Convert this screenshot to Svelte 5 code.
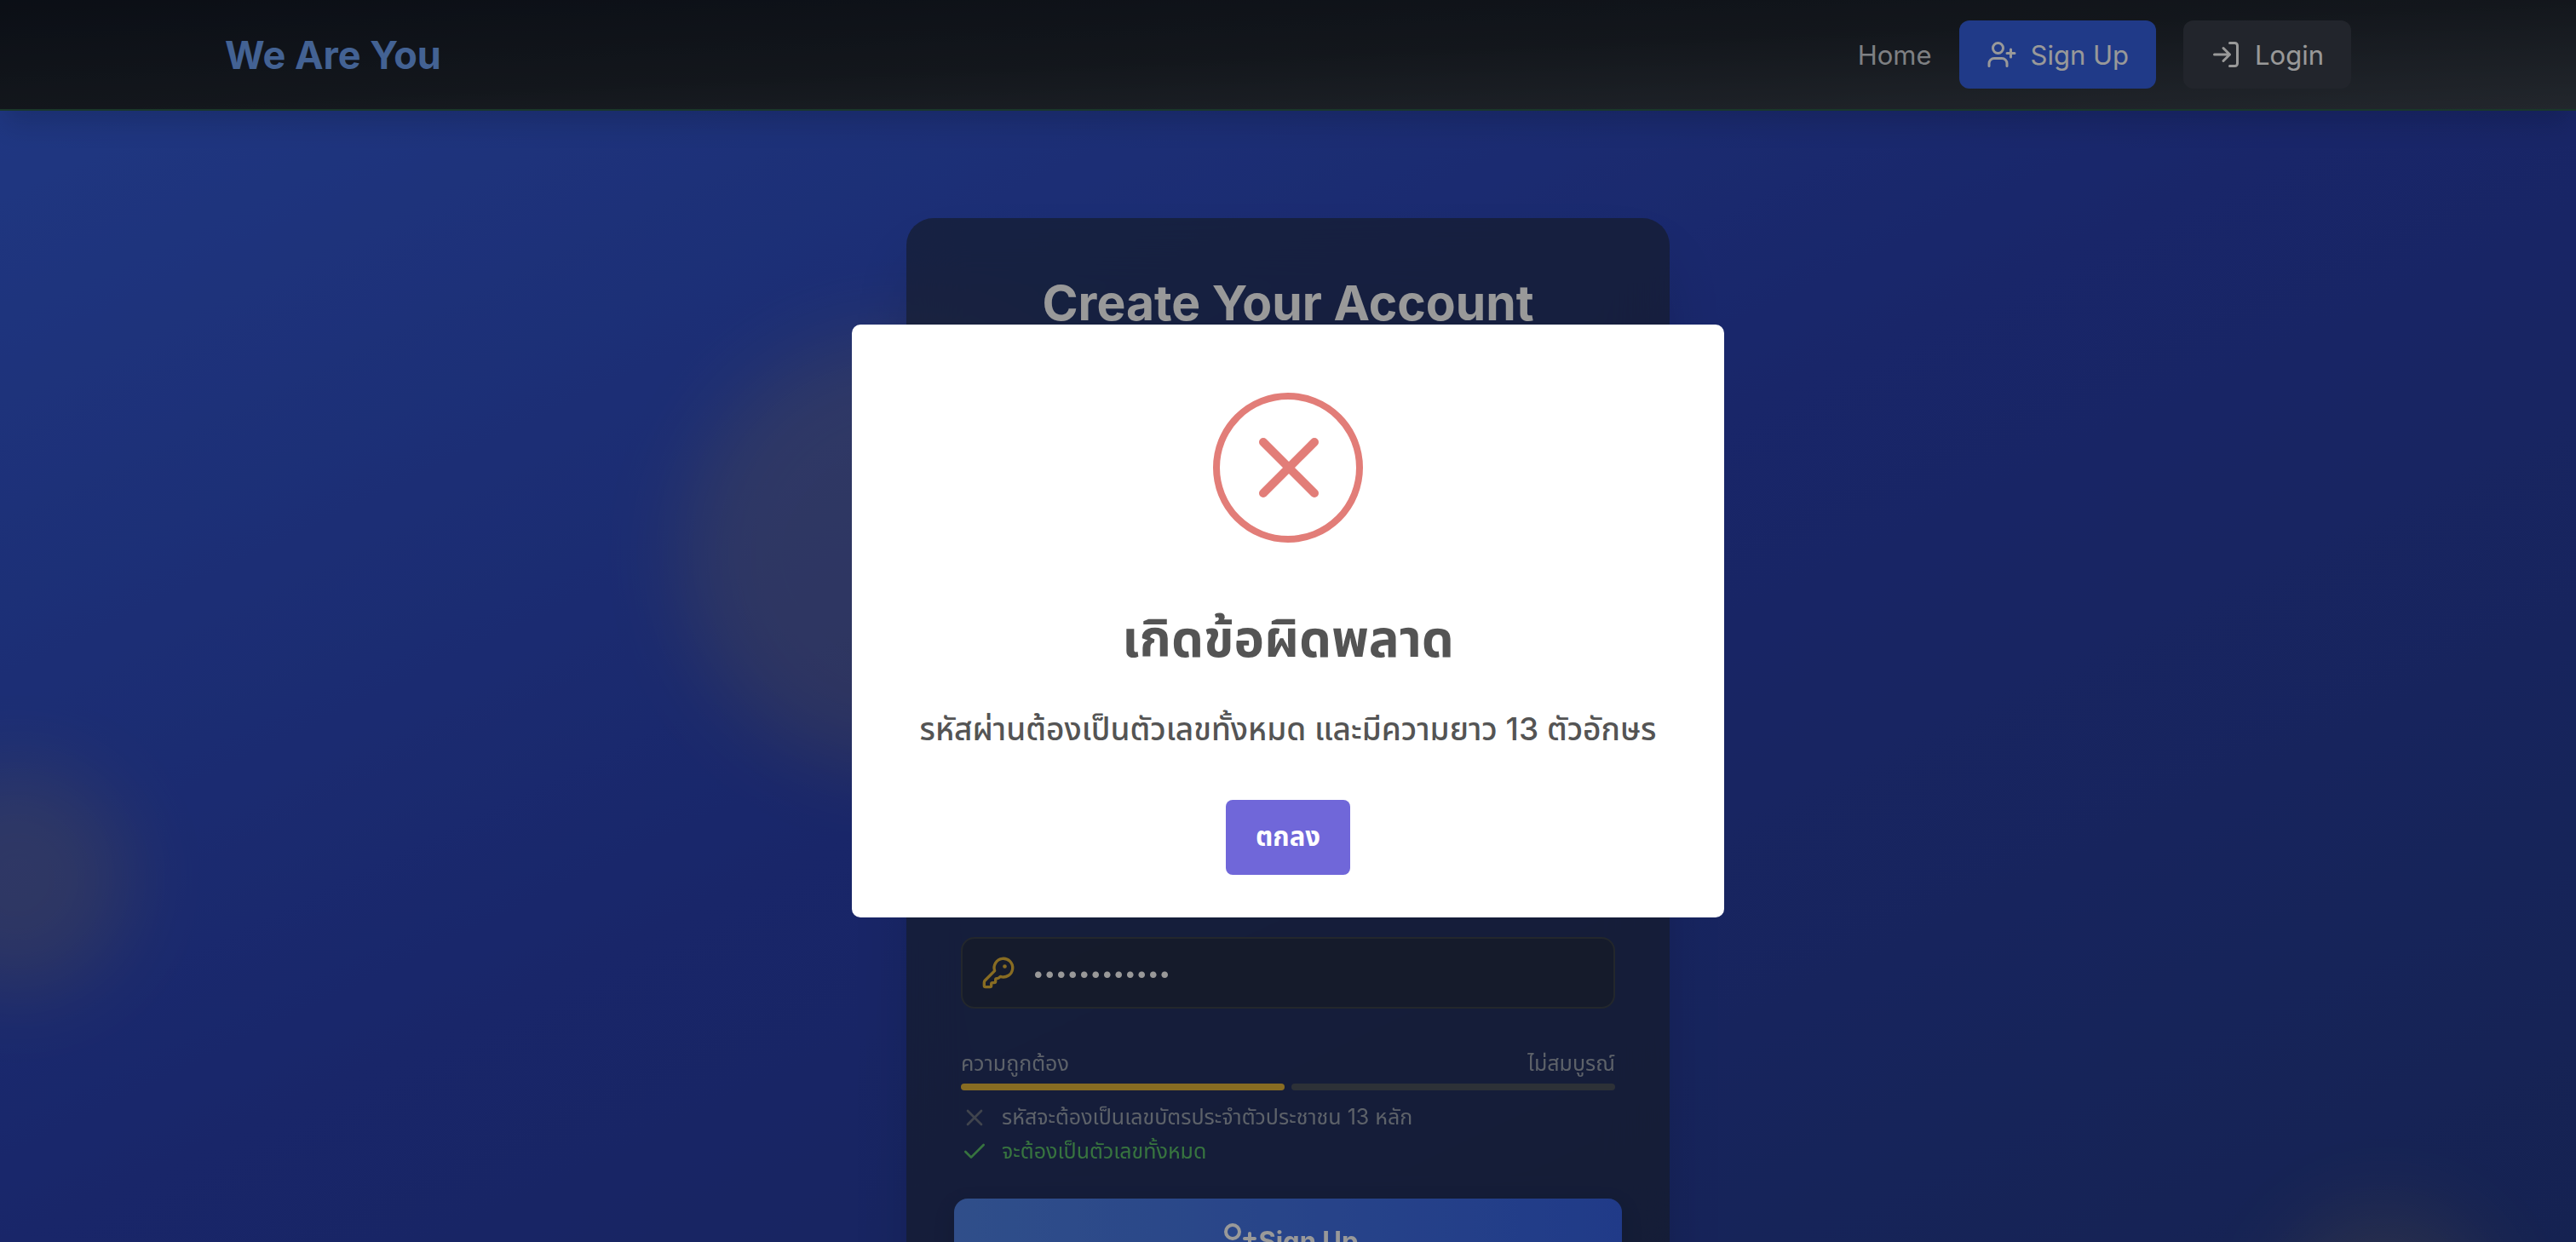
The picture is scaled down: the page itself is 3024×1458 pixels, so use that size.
<script>
  let password = $state('123456789012');
  const rules = [
    { text: 'รหัสจะต้องเป็นเลขบัตรประจำตัวประชาชน 13 หลัก', ok: false },
    { text: 'จะต้องเป็นตัวเลขทั้งหมด', ok: true }
  ];
</script>

{#snippet userPlus()}
  <svg class="icon" viewBox="0 0 24 24" aria-hidden="true">
    <path d="M16 21v-2a4 4 0 0 0-4-4H6a4 4 0 0 0-4 4v2" />
    <circle cx="9" cy="7" r="4" />
    <path d="M19 8v6M22 11h-6" />
  </svg>
{/snippet}

<div class="page">
  <div class="blob blob-main"></div>
  <div class="blob blob-left"></div>
  <div class="blob blob-right"></div>

  <header>
    <div class="bar">
      <a class="logo" href="#home">We Are You</a>
      <nav>
        <a class="link" href="#home">Home</a>
        <a class="pill primary" href="#signup">{@render userPlus()}Sign Up</a>
        <a class="pill" href="#login">
          <svg class="icon" viewBox="0 0 24 24" aria-hidden="true">
            <path d="M15 3h4a2 2 0 0 1 2 2v14a2 2 0 0 1-2 2h-4" />
            <path d="M10 17l5-5-5-5M15 12H3" />
          </svg>Login</a>
      </nav>
    </div>
  </header>

  <main>
    <section class="card">
      <h1>Create Your Account</h1>
      <form>
        <div class="field">
          <svg class="icon key" viewBox="0 0 24 24" aria-hidden="true">
            <path d="M2.586 17.414A2 2 0 0 0 2 18.828V21a1 1 0 0 0 1 1h3a1 1 0 0 0 1-1v-1a1 1 0 0 1 1-1h1a1 1 0 0 0 1-1v-1a1 1 0 0 1 1-1h.172a2 2 0 0 0 1.414-.586l.814-.814a6.5 6.5 0 1 0-4-4z" />
            <circle class="dot" cx="16.5" cy="7.5" r="0.9" />
          </svg>
          <input type="password" aria-labelledby="strength" bind:value={password} />
        </div>
        <div class="strength">
          <span id="strength">ความถูกต้อง</span>
          <span>ไม่สมบูรณ์</span>
        </div>
        <div class="meter">
          <span class="on"></span>
          <span></span>
        </div>
        <ul>
          {#each rules as rule}
            <li class:ok={rule.ok}>
              <svg class="icon" viewBox="0 0 24 24" aria-hidden="true">
                {#if rule.ok}
                  <path d="M20 6L9 17l-5-5" />
                {:else}
                  <path d="M18 6L6 18M6 6l12 12" />
                {/if}
              </svg>
              {rule.text}
            </li>
          {/each}
        </ul>
        <button class="submit" type="button">{@render userPlus()}Sign Up</button>
      </form>
    </section>
  </main>
</div>

<div class="overlay">
  <div class="modal" role="alertdialog" aria-labelledby="alert-title" aria-describedby="alert-text">
    <svg class="error" viewBox="0 0 176 176" aria-hidden="true">
      <circle cx="88" cy="88" r="84" />
      <path d="M59 58l60 60M119 58l-60 60" />
    </svg>
    <h2 id="alert-title">เกิดข้อผิดพลาด</h2>
    <p id="alert-text">รหัสผ่านต้องเป็นตัวเลขทั้งหมด และมีความยาว 13 ตัวอักษร</p>
    <button type="button">ตกลง</button>
  </div>
</div>

<style>
  :global(body) {
    height: 100vh;
    overflow: hidden;
    font-family: Inter, 'Noto Sans Thai', 'Noto Sans', sans-serif;
  }
  * {
    box-sizing: border-box;
  }
  h1, h2, p, ul {
    margin: 0;
    padding: 0;
  }
  a {
    color: inherit;
    text-decoration: none;
  }
  button, input {
    font: inherit;
    border: 0;
  }
  .icon {
    flex: none;
    fill: none;
    stroke: currentColor;
    stroke-width: 2;
    stroke-linecap: round;
    stroke-linejoin: round;
  }
  .page {
    position: relative;
    height: 100vh;
    overflow: hidden;
    background: linear-gradient(to bottom right, #365fdc 0%, #2a40b0 50%, #243a88 100%);
  }
  .blob {
    position: absolute;
    border-radius: 50%;
    background: #f0c040;
    opacity: 0.17;
    filter: blur(48px);
  }
  .blob-main {
    left: 800px;
    top: 394px;
    width: 512px;
    height: 512px;
  }
  .blob-left {
    left: -112px;
    top: 900px;
    width: 264px;
    height: 264px;
  }
  .blob-right {
    right: 96px;
    top: 1420px;
    width: 256px;
    height: 256px;
  }
  header {
    position: relative;
    background: linear-gradient(to bottom right, #131925, #20262f 50%, #3a414b);
    border-bottom: 2px solid #2c5c48;
    box-shadow: 0 20px 30px -6px rgba(0, 0, 0, 0.15);
  }
  .bar {
    display: flex;
    align-items: center;
    justify-content: space-between;
    max-width: 2560px;
    height: 128px;
    margin: 0 auto;
    padding: 0 32px;
  }
  .logo {
    color: #71a3f6;
    font-size: 45px;
    font-weight: 700;
  }
  nav {
    display: flex;
    align-items: center;
    gap: 32px;
    font-size: 31px;
  }
  .link {
    color: #d2d5da;
  }
  .pill {
    display: flex;
    align-items: center;
    gap: 16px;
    height: 80px;
    padding: 0 32px;
    border-radius: 12px;
    background: #3a3f4a;
    color: #fff;
  }
  .pill .icon {
    width: 36px;
    height: 36px;
  }
  .primary {
    background: #3662e3;
  }
  main {
    position: relative;
    display: flex;
    justify-content: center;
    padding: 126px 32px 64px;
  }
  .card {
    width: 896px;
    padding: 64px;
    border-radius: 32px;
    background: rgba(33, 41, 54, 0.6);
    backdrop-filter: blur(32px);
    box-shadow: 0 40px 80px -20px rgba(0, 0, 0, 0.2);
  }
  h1 {
    color: #fff;
    font-size: 57px;
    line-height: 72px;
    font-weight: 700;
    text-align: center;
  }
  form {
    margin-top: 708px;
  }
  .field {
    position: relative;
  }
  .key {
    position: absolute;
    left: 24px;
    top: 22px;
    width: 40px;
    height: 40px;
    color: #e3b53a;
  }
  .dot {
    fill: currentColor;
    stroke-width: 1;
  }
  .field input {
    display: block;
    width: 100%;
    height: 84px;
    padding: 0 24px 0 82px;
    border: 2px solid #3b424a;
    border-radius: 16px;
    background: rgba(36, 43, 52, 0.55);
    color: #fff;
    font-size: 24px;
  }
  .strength {
    display: flex;
    justify-content: space-between;
    margin-top: 48px;
    color: #9ca3af;
    font-size: 25px;
    line-height: 32px;
  }
  .meter {
    display: grid;
    grid-template-columns: 1fr 1fr;
    gap: 8px;
    margin-top: 8px;
  }
  .meter span {
    height: 8px;
    border-radius: 4px;
    background: #4b525c;
  }
  .meter .on {
    background: #e3b53a;
  }
  ul {
    margin-top: 12px;
    list-style: none;
  }
  li {
    display: flex;
    align-items: center;
    gap: 16px;
    height: 40px;
    color: #9ca3af;
    font-size: 25px;
  }
  li .icon {
    width: 32px;
    height: 32px;
    color: #6b7280;
  }
  li.ok, li.ok .icon {
    color: #5dc269;
  }
  .submit {
    display: flex;
    align-items: center;
    justify-content: center;
    width: calc(100% + 16px);
    height: 98px;
    margin: 35px -8px 0;
    border-radius: 16px;
    background: linear-gradient(to right, #5083e6, #3662e3);
    color: #fff;
    font-size: 31px;
    font-weight: 700;
    box-shadow: 0 8px 24px rgba(0, 0, 0, 0.15);
  }
  .submit .icon {
    width: 48px;
    height: 48px;
  }
  .overlay {
    position: fixed;
    inset: 0;
    display: flex;
    align-items: center;
    justify-content: center;
    background: rgba(0, 0, 0, 0.4);
  }
  .modal {
    display: flex;
    flex-direction: column;
    align-items: center;
    width: 1024px;
    padding: 80px 32px 50px;
    border-radius: 10px;
    background: #fff;
    color: #545454;
    text-align: center;
  }
  .error {
    width: 176px;
    height: 176px;
    fill: none;
    stroke: #e27d78;
    stroke-width: 8;
  }
  .error path {
    stroke-width: 10;
    stroke-linecap: round;
  }
  h2 {
    margin-top: 76px;
    font-size: 60px;
    line-height: 72px;
    font-weight: 700;
  }
  p {
    margin-top: 44px;
    font-size: 37px;
    line-height: 54px;
    font-weight: 500;
  }
  .modal button {
    height: 88px;
    margin-top: 56px;
    padding: 0 35px;
    border-radius: 8px;
    background: #7067d9;
    color: #fff;
    font-size: 31px;
    font-weight: 700;
  }
</style>
